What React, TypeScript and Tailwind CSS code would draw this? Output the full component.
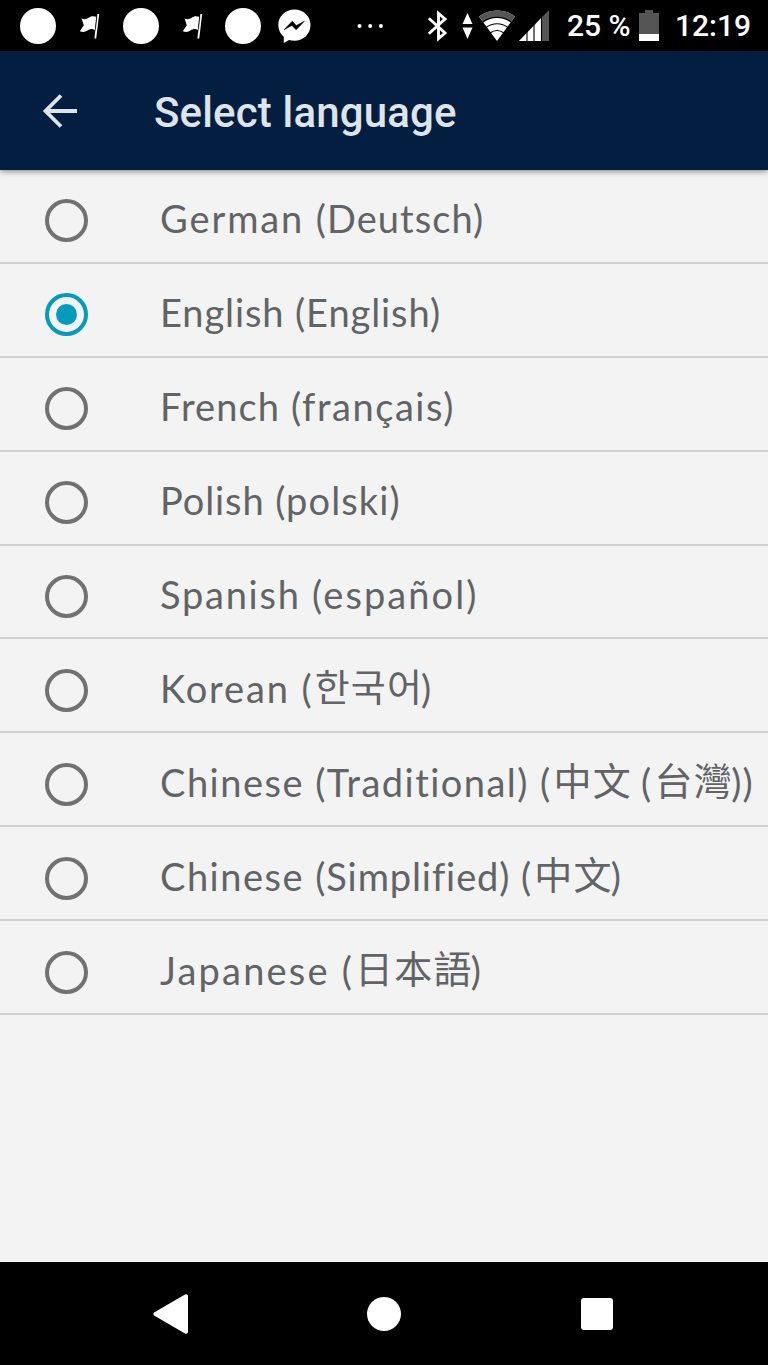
const languages = [
    { name: "German", nameTracking: "tracking-[1.9px]", native: "(Deutsch)", tracking: "tracking-[1.05px]" },
    { name: "English", nameTracking: "tracking-[0.9px]", native: "(English)", tracking: "tracking-[0.9px]" },
    { name: "French", nameTracking: "tracking-[1.1px]", native: "(français)", tracking: "tracking-[1.55px]" },
    { name: "Polish", nameTracking: "tracking-[0.9px]", native: "(polski)", tracking: "tracking-[1.1px]" },
    { name: "Spanish", nameTracking: "tracking-[1.75px]", native: "(español)", tracking: "tracking-[2.1px]" },
    { name: "Korean", nameTracking: "tracking-[1.9px]", native: "(한국어)", tracking: "tracking-[1.1px]" },
    { name: "Chinese", nameTracking: "tracking-[1.5px]", region: "(Traditional)", regionTracking: "tracking-[1.45px]", native: "(中文 (台灣))", tracking: "tracking-[1.3px]" },
    { name: "Chinese", nameTracking: "tracking-[1.5px]", region: "(Simplified)", regionTracking: "tracking-[0.9px]", native: "(中文)", tracking: "tracking-[1.2px]" },
    { name: "Japanese", nameTracking: "tracking-[2.2px]", native: "(日本語)", tracking: "tracking-[1.2px]" },
];

function Flag({ className }: { className: string }) {
    return (
        <svg viewBox="0 0 21 26" className={`h-[26px] w-[21px] shrink-0 ${className}`} fill="#fff">
            <path d="M2.500 5.500C5 7 7.500 6.300 10 4.600S14.500 3 17.300 3.800L15.800 17C13 15.500 11 16 8.500 17.600S4 19.500.8 18.200L4.800 12.300z" />
            <path d="M19.300 1L16.300 25.500" stroke="#fff" strokeWidth="1.800" />
            <path d="M17.800 4L16.500 16" stroke="#000" strokeWidth=".5" />
        </svg>
    );
}

function StatusBar() {
    return (
        <div className="flex h-[51px] items-center bg-black font-[Roboto,sans-serif] text-[30px] font-medium text-white">
            <span className="ml-5 size-9 shrink-0 rounded-full bg-white"></span>
            <Flag className="ml-[23px]" />
            <span className="ml-[23px] size-9 shrink-0 rounded-full bg-white"></span>
            <Flag className="ml-[23px]" />
            <span className="ml-[22px] size-9 shrink-0 rounded-full bg-white"></span>
            <svg viewBox="0 0 33 34" className="ml-[17px] h-[34px] w-[33px] shrink-0">
                <path d="M16.500.5C7.500.5.300 7 .300 16c0 5 2.200 9 5.500 11.800V34l5.200-3c1.800.5 3.600.8 5.500.8 9 0 16-7 16-15.800S25.500.5 16.500.5z" fill="#fff" />
                <path d="M6 20.800l8.200-8.600 4.200 4.200 8-4.200-8.300 8.600-4.200-4.300z" fill="#000" stroke="#000" strokeWidth=".5" />
            </svg>
            <svg viewBox="0 0 27 6" className="ml-[46px] h-1.5 w-[27px] shrink-0" fill="#fff">
                <circle cx="2.500" cy="3" r="2" />
                <circle cx="13.200" cy="3" r="2" />
                <circle cx="23.900" cy="3" r="2" />
            </svg>
            <svg viewBox="0 0 21 32" className="ml-[43px] h-8 w-[21px] shrink-0" fill="none" stroke="#fff" strokeWidth="2.900">
                <path d="M1.800 8.200L18 23l-6.500 5.500V3.500L18 9 1.800 23.800" />
            </svg>
            <svg viewBox="0 0 11 26" className="ml-3.5 h-[26px] w-[11px] shrink-0" fill="#fff">
                <path d="M5.500 0L10.500 11H.5zM5.500 26L10.500 14.500H.5z" />
            </svg>
            <svg viewBox="0 0 36 31" className="ml-1.5 h-[31px] w-9 shrink-0">
                <path d="M18 31L0 6.500C10-1.500 26-1.500 36 6.500z" fill="#fff" />
                <path d="M0 6.500C10-1.500 26-1.500 36 6.500L32 12C24 5.500 12 5.500 4 12z" fill="#555" />
                <path d="M3.500 12.300C12 5.700 24 5.700 32.500 12.300M7 17.500C13.500 12.500 22.500 12.500 29 17.500M11 23C15.500 19.800 20.500 19.800 25 23" stroke="#000" strokeWidth="1.200" fill="none" />
            </svg>
            <svg viewBox="0 0 30 31" className="ml-1 h-[31px] w-[30px] shrink-0">
                <path d="M30 0v31H0z" fill="#555" />
                <path d="M22 8.300V31H0z" fill="#fff" />
                <path d="M8 20v11M15 14v17M22.500 7v24" stroke="#000" strokeWidth="1.100" />
            </svg>
            <span className="ml-[18px] w-[62px] shrink-0 whitespace-nowrap leading-none">25 %</span>
            <svg viewBox="0 0 20 31" className="ml-2.5 h-[31px] w-5 shrink-0">
                <path d="M6 0h8v3h6v28H0V3h6z" fill="#555" />
                <path d="M0 24h20v7H0z" fill="#fff" />
            </svg>
            <span className="ml-4 whitespace-nowrap leading-none">12:19</span>
        </div>
    );
}

function AppHeader() {
    return (
        <header className="relative flex h-[119px] items-center bg-[#031e41] text-[#dfe4ea] shadow-[0_1px_6px_rgba(0,0,0,0.5)]">
            <svg viewBox="0 0 36 36" className="ml-[41px] size-9 shrink-0" fill="none" stroke="currentColor" strokeWidth="3.800">
                <path d="M20 2.500L4.500 18 20 33.500M4 18h32" />
            </svg>
            <h1 className="ml-[77px] mt-1 font-[Roboto,sans-serif] text-[42px] leading-none font-medium tracking-[0.15px]">Select language</h1>
        </header>
    );
}

// CJK glyphs sit a little above the latin baseline
function NativeName({ text, className }: { text: string; className: string }) {
    return (
        <span className={className}>
            {text.split(/([^\u0000-\u024f]+)/).map((part, index) => (
                index % 2 ? <span key={index} className="relative -top-0.5 left-0.5">{part}</span> : part
            ))}
        </span>
    );
}

function LanguageRow({ language, selected }: { language: any; selected: boolean }) {
    return (
        <li className="flex items-center border-b-2 border-[#d0d2d2]">
            <span className={`mt-2.5 ml-[44.5px] flex size-[43px] shrink-0 items-center justify-center rounded-full border-4 ${selected ? "border-[#069bbd]" : "border-[#717171]"}`}>
                {selected && <span className="size-[21px] rounded-full bg-[#069bbd]"></span>}
            </span>
            <span className="mt-[5px] ml-[72.5px] whitespace-nowrap font-[Lato,'Noto_Sans_CJK_TC','Noto_Sans_CJK_KR',sans-serif] text-[38px] leading-none text-[#626366]">
                <span className={language.nameTracking}>{language.name} </span>
                {language.region && <span className={language.regionTracking}>{language.region} </span>}
                <NativeName text={language.native} className={language.tracking} />
            </span>
        </li>
    );
}

function NavigationBar() {
    return (
        <nav className="flex h-[103px] items-center bg-black">
            <svg viewBox="0 0 36 40" className="ml-[153px] h-10 w-9" fill="#fff" stroke="#fff" strokeWidth="4" strokeLinejoin="round">
                <path d="M2.500 20L33 2.300v35.400z" />
            </svg>
            <span className="ml-[178px] size-[34px] rounded-full bg-white"></span>
            <span className="ml-[180px] size-8 rounded-[3px] bg-white"></span>
        </nav>
    );
}

export default function App() {
    return (
        <div className="flex h-[1365px] w-[768px] flex-col overflow-hidden bg-[#f3f3f3]">
            <StatusBar />
            <AppHeader />
            <ul className="grid h-[845px] grid-rows-9">
                {languages.map((language, index) => (
                    <LanguageRow key={index} language={language} selected={index === 1} />
                ))}
            </ul>
            <div className="flex-1"></div>
            <NavigationBar />
        </div>
    );
}
